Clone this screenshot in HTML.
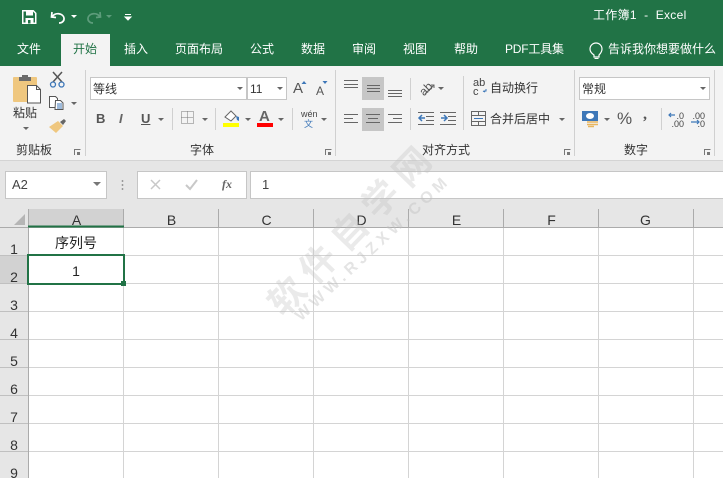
<!DOCTYPE html>
<html><head><meta charset="utf-8"><style>
html,body{margin:0;padding:0}
#p{position:relative;width:723px;height:478px;overflow:hidden;background:#fff;font-family:"Liberation Sans","Noto Sans CJK SC",sans-serif;color:#333}
.a{position:absolute;white-space:nowrap}
.tab{position:absolute;top:41px;font-size:12px;line-height:16px;color:#fff;white-space:nowrap}
.lbl{position:absolute;top:142px;font-size:12px;line-height:16px;color:#333;white-space:nowrap}
.sep{position:absolute;width:1px;background:#d0d0d0}
.box{position:absolute;background:#fff;border:1px solid #c6c6c6;box-sizing:border-box}
.ch{position:absolute;top:211px;width:95px;text-align:center;font-size:14px;line-height:18px;color:#333}
.rh{position:absolute;left:0;width:28px;text-align:center;font-size:14px;line-height:18px;color:#333}
.arr{position:absolute;width:0;height:0;border-left:3px solid transparent;border-right:3px solid transparent;border-top:3px solid #666}
svg{position:absolute;left:0;top:0}
</style></head><body><div id="p">
<div class="a" style="left:0;top:0;width:723px;height:66px;background:#217346"></div>
<div class="a" style="left:61px;top:34px;width:49px;height:32px;background:#f3f3f3"></div>
<div class="a" style="left:0;top:66px;width:723px;height:94px;background:#f3f3f3"></div>
<div class="a" style="left:0;top:160px;width:723px;height:1px;background:#d4d4d4"></div>
<div class="a" style="left:0;top:161px;width:723px;height:48px;background:#e6e6e6"></div>

<div class="tab" style="left:17px">文件</div>
<div class="tab" style="left:73px;color:#217346">开始</div>
<div class="tab" style="left:124px">插入</div>
<div class="tab" style="left:175px">页面布局</div>
<div class="tab" style="left:250px">公式</div>
<div class="tab" style="left:301px">数据</div>
<div class="tab" style="left:352px">审阅</div>
<div class="tab" style="left:403px">视图</div>
<div class="tab" style="left:454px">帮助</div>
<div class="tab" style="left:505px;letter-spacing:-.2px">PDF工具集</div>
<div class="tab" style="left:608px">告诉我你想要做什么</div>
<div class="a" style="left:593px;top:7px;font-size:12px;line-height:16px;color:#fff;letter-spacing:.3px">工作簿1 &nbsp;- &nbsp;Excel</div>

<div class="box" style="left:90px;top:77px;width:157px;height:23px"></div>
<div class="a" style="left:93px;top:81px;font-size:12px;line-height:16px">等线</div>
<div class="box" style="left:247px;top:77px;width:40px;height:23px"></div>
<div class="a" style="left:250px;top:81px;font-size:12px;line-height:16px">11</div>
<div class="box" style="left:579px;top:77px;width:131px;height:23px"></div>
<div class="a" style="left:582px;top:81px;font-size:12px;line-height:16px">常规</div>
<div class="a" style="left:362px;top:77px;width:22px;height:23px;background:#c6c6c6"></div>
<div class="a" style="left:362px;top:108px;width:22px;height:23px;background:#c6c6c6"></div>

<div class="a" style="left:13px;top:105px;font-size:12px;line-height:16px">粘贴</div>
<div class="lbl" style="left:16px">剪贴板</div>
<div class="lbl" style="left:190px">字体</div>
<div class="lbl" style="left:422px">对齐方式</div>
<div class="lbl" style="left:624px">数字</div>
<div class="a" style="left:490px;top:80px;font-size:12px;line-height:16px">自动换行</div>
<div class="a" style="left:490px;top:111px;font-size:12px;line-height:16px">合并后居中</div>
<div class="a" style="left:96px;top:111px;font:bold 13px/16px 'Liberation Sans',sans-serif;color:#555">B</div>
<div class="a" style="left:119px;top:111px;font:italic bold 13px/16px 'Liberation Sans',sans-serif;color:#666">I</div>
<div class="a" style="left:141px;top:111px;font:bold 13px/16px 'Liberation Sans',sans-serif;color:#555;text-decoration:underline">U</div>
<div class="a" style="left:293px;top:80px;font:15px/18px 'Liberation Sans',sans-serif;color:#555">A</div>
<div class="a" style="left:316px;top:83px;font:12px/16px 'Liberation Sans',sans-serif;color:#555">A</div>
<div class="a" style="left:259px;top:109px;font:bold 15px/16px 'Liberation Sans',sans-serif;color:#666">A</div>
<div class="a" style="left:301px;top:109px;font:9px/10px 'Liberation Sans',sans-serif;color:#444">wén</div>
<div class="a" style="left:304px;top:119px;font:9px/10px 'Liberation Sans','Noto Sans CJK SC',sans-serif;color:#3d77b8">文</div>
<div class="a" style="left:473px;top:79px;font:11px/9px 'Liberation Sans',sans-serif;color:#444">ab<br>c</div>
<div class="a" style="left:617px;top:110px;font:17px/18px 'Liberation Sans',sans-serif;color:#555">%</div>
<div class="a" style="left:643px;top:106px;font:bold 16px/18px 'Liberation Serif',serif;color:#555">,</div>
<div class="a" style="left:664px;width:20px;top:112px;font:9px/8px 'Liberation Sans',sans-serif;color:#444;text-align:right">.0<br>.00</div>
<div class="a" style="left:685px;width:20px;top:112px;font:9px/8px 'Liberation Sans',sans-serif;color:#444;text-align:right">.00<br>.0</div>

<div class="arr" style="left:23px;top:127px"></div>
<div class="arr" style="left:71px;top:102px"></div>
<div class="arr" style="left:158px;top:118px"></div>
<div class="arr" style="left:202px;top:118px"></div>
<div class="arr" style="left:245px;top:118px"></div>
<div class="arr" style="left:278px;top:118px"></div>
<div class="arr" style="left:321px;top:118px"></div>
<div class="arr" style="left:237px;top:87px"></div>
<div class="arr" style="left:277px;top:87px"></div>
<div class="arr" style="left:438px;top:87px"></div>
<div class="arr" style="left:559px;top:118px"></div>
<div class="arr" style="left:700px;top:87px"></div>
<div class="arr" style="left:604px;top:118px"></div>

<div class="sep" style="left:85px;top:70px;height:86px"></div>
<div class="sep" style="left:335px;top:70px;height:86px"></div>
<div class="sep" style="left:574px;top:70px;height:86px"></div>
<div class="sep" style="left:714px;top:70px;height:86px"></div>
<div class="sep" style="left:172px;top:108px;height:22px"></div>
<div class="sep" style="left:215px;top:108px;height:22px"></div>
<div class="sep" style="left:292px;top:108px;height:22px"></div>
<div class="sep" style="left:410px;top:78px;height:22px"></div>
<div class="sep" style="left:410px;top:108px;height:22px"></div>
<div class="sep" style="left:463px;top:76px;height:54px"></div>
<div class="sep" style="left:661px;top:108px;height:22px"></div>

<div class="box" style="left:5px;top:171px;width:102px;height:28px;background:#fff"></div>
<div class="a" style="left:12px;top:177px;font-size:13px;line-height:16px;color:#444">A2</div>
<div class="a" style="left:93px;top:182px;border-left:4px solid transparent;border-right:4px solid transparent;border-top:4px solid #777"></div>
<div class="box" style="left:137px;top:171px;width:110px;height:28px;background:#fff"></div>
<div class="box" style="left:250px;top:171px;width:480px;height:28px;background:#fff"></div>
<div class="a" style="left:262px;top:177px;font-size:13px;line-height:16px;color:#444">1</div>
<div class="a" style="left:222px;top:176px;font:italic bold 12px/16px 'Liberation Serif',serif;color:#666">fx</div>

<div class="a" style="left:0;top:209px;width:723px;height:18px;background:#e6e6e6"></div>
<div class="a" style="left:0;top:227px;width:28px;height:251px;background:#e6e6e6"></div>
<div class="a" style="left:28px;top:209px;width:96px;height:18px;background:#d2d2d2"></div>
<div class="a" style="left:0;top:255px;width:28px;height:28px;background:#d2d2d2"></div>

<svg width="723" height="478" viewBox="0 0 723 478" fill="none">
<!-- grid -->
<g stroke="#d4d4d4" stroke-width="1">
<path d="M28 255.500H723M28 283.500H723M28 311.500H723M28 339.500H723M28 367.500H723M28 395.500H723M28 423.500H723M28 451.500H723"/>
<path d="M123.500 227V478M218.500 227V478M313.500 227V478M408.500 227V478M503.500 227V478M598.500 227V478M693.500 227V478"/>
</g>
<path d="M0 227.500H723" stroke="#ababab"/>
<path d="M28.500 209V478" stroke="#ababab"/>
<path d="M123.500 209V227M218.500 209V227M313.500 209V227M408.500 209V227M503.500 209V227M598.500 209V227M693.500 209V227" stroke="#ababab"/>
<path d="M0 255.500H28M0 283.500H28M0 311.500H28M0 339.500H28M0 367.500H28M0 395.500H28M0 423.500H28M0 451.500H28" stroke="#c0c0c0"/>
<path d="M28 226.500H124" stroke="#217346" stroke-width="2"/>
<path d="M25 214V225H14Z" fill="#b5b5b5"/>
<rect x="28" y="255" width="96" height="29" stroke="#217346" stroke-width="2"/>
<rect x="121" y="281" width="5" height="5" fill="#217346"/>

<!-- qat -->
<path d="M22.750 10.750h10.500l2.500 2.500v10h-13z" stroke="#fff" stroke-width="1.500"/>
<path d="M26 10.500h7v5h-7zM25.500 24v-6h8v6" fill="#fff"/><rect x="28" y="20" width="2.500" height="3.500" fill="#217346"/>
<path d="M52 12l-.5 5 4.500.5M52 17c3-5 11-4 12 1 .5 3-2 5-5 5" stroke="#fff" stroke-width="1.700"/>
<path d="M71 15h6l-3 3z" fill="#fff"/>
<path d="M100 12l.5 5-4.500.5M100 17c-3-5-11-4-12 1-.5 3 2 5 5 5" stroke="#5d9c7b" stroke-width="1.700"/>
<path d="M106 15h6l-3 3z" fill="#5d9c7b"/>
<path d="M125 14.500h6M125 17h6l-3 3z" stroke="#fff" stroke-width="1" fill="#fff"/>
<!-- bulb -->
<path d="M594 55c-3-2-4-4-4-6a6 6 0 0 1 12 0c0 2-1 4-3 6v2h-5z" stroke="#fff" stroke-width="1.200"/>
<path d="M594.500 58.500h4" stroke="#fff"/>

<!-- clipboard -->
<rect x="13" y="77" width="24" height="25" rx="1" fill="#efc77f"/>
<path d="M19 77h12v4H19zM22 75h6v3h-6z" fill="#6b6b6b"/>
<path d="M27.500 85.500h9l4 4v13.500h-13z" fill="#fff" stroke="#555"/>
<path d="M36.500 85.500v4h4" stroke="#555"/>
<!-- scissors -->
<path d="M53 72l9 10M62 72L53 82" stroke="#555" stroke-width="1.500"/>
<circle cx="53" cy="84.500" r="2.500" stroke="#3d77b8" stroke-width="1.300"/><circle cx="61.500" cy="84.500" r="2.500" stroke="#3d77b8" stroke-width="1.300"/>
<!-- copy -->
<path d="M49.500 96.500h6l2 2v9h-8z" fill="#fff" stroke="#555"/><path d="M55.500 100.500h5l2.500 2.500v6.500h-8z" fill="#fff" stroke="#555"/>
<path d="M57 104h5M57 106h5M57 108h5" stroke="#3d77b8"/>
<!-- brush -->
<path d="M49 127l9-6 5 5-7 7z" fill="#efc77f"/><path d="M60 122l4-3 2 2-3 4z" fill="#666"/>
<!-- dialog launchers -->
<g stroke="#777"><path d="M74.500 155v-5.500h6M325.500 155v-5.500h6M564.500 155v-5.500h6M704.500 155v-5.500h6"/></g>
<g fill="#777"><rect x="77" y="152" width="3" height="3"/><rect x="328" y="152" width="3" height="3"/><rect x="567" y="152" width="3" height="3"/><rect x="707" y="152" width="3" height="3"/></g>
<!-- border icon -->
<path d="M181.500 111.500h12v12h-12zM187.500 111.500v12M181.500 117.500h12" stroke="#777" stroke-dasharray="1 1"/>
<!-- fill -->
<path d="M225 117l6-6 5 5-5 5z" fill="#fff" stroke="#666"/>
<path d="M236 116l3 1 0 4-2-1z" fill="#3d77b8"/>
<rect x="223" y="123" width="16" height="4" fill="#ffff00"/>
<rect x="257" y="123" width="16" height="4" fill="#ff0000"/>
<!-- size up/down -->
<path d="M301.500 84l2.500-3 2.500 3zM322.500 81l2.500 3 2.500-3z" fill="#3d77b8"/>
<!-- alignment -->
<g stroke="#666" stroke-width="1">
<path d="M344 80.500h14M344 84.500h14M344 87.500h14"/>
<path d="M367 85.500h13M367 88.500h13M367 91.500h13"/>
<path d="M388 90.500h14M388 93.500h14M388 96.500h14"/>
<path d="M344 114.500h14M344 118.500h9M344 122.500h14"/>
<path d="M366 114.500h14M368 118.500h10M366 122.500h14"/>
<path d="M388 114.500h14M393 118.500h9M388 122.500h14"/>
<path d="M418 112.500h16M426 116.500h8M426 120.500h8M418 124.500h16"/>
<path d="M440 112.500h16M448 116.500h8M448 120.500h8M440 124.500h16"/>
<path d="M425 94l9-9M431 85h3v3"/>
</g>
<text x="418" y="94" font-family="Liberation Sans" font-size="12" fill="#555" transform="rotate(-45 424 88)">ab</text>
<path d="M419 118h6M422 115l-3 3 3 3" stroke="#3d77b8" stroke-width="1.500"/>
<path d="M441 118h6M444 115l3 3-3 3" stroke="#3d77b8" stroke-width="1.500"/>
<path d="M484 91h2v-2M485 92l-2-1" stroke="#3d77b8"/>
<!-- merge -->
<rect x="471.500" y="111.500" width="14" height="14" stroke="#666"/>
<path d="M471.500 115.500h14M471.500 121.500h14M478.500 111.500v4M478.500 121.500v4" stroke="#666"/>
<path d="M474 118.500h9" stroke="#3d77b8"/>
<!-- accounting -->
<rect x="582" y="111" width="16" height="10" fill="#3d77b8"/><ellipse cx="590" cy="116" rx="4" ry="3" fill="#fff"/>
<path d="M587 122h11M587 124.500h11M588 126.500h6" stroke="#e9b65e" stroke-width="1.500"/>
<!-- decimal arrows -->
<path d="M675 115h-6M671 113l-2 2 2 2" stroke="#3d77b8" stroke-width="1.200"/>
<path d="M691 122h8M697 120l2 2-2 2" stroke="#3d77b8" stroke-width="1.200"/>
<!-- formula bar -->
<path d="M122.500 180v2M122.500 184v2M122.500 188v2" stroke="#9a9a9a" stroke-width="1.500"/>
<path d="M151 180l9 9M160 180l-9 9" stroke="#c8c8c8" stroke-width="1.500"/>
<path d="M186 185l4 4 7-9" stroke="#c8c8c8" stroke-width="2"/>
</svg>

<div class="ch" style="left:29px">A</div>
<div class="ch" style="left:124px">B</div>
<div class="ch" style="left:219px">C</div>
<div class="ch" style="left:314px">D</div>
<div class="ch" style="left:409px">E</div>
<div class="ch" style="left:504px">F</div>
<div class="ch" style="left:598px">G</div>
<div class="rh" style="top:240px">1</div>
<div class="rh" style="top:268px">2</div>
<div class="rh" style="top:296px">3</div>
<div class="rh" style="top:324px">4</div>
<div class="rh" style="top:352px">5</div>
<div class="rh" style="top:380px">6</div>
<div class="rh" style="top:408px">7</div>
<div class="rh" style="top:436px">8</div>
<div class="rh" style="top:464px">9</div>
<div class="a" style="left:28px;top:233px;width:96px;text-align:center;font-size:14px;line-height:20px;color:#222">序列号</div>
<div class="a" style="left:28px;top:261px;width:96px;text-align:center;font-size:14px;line-height:20px;color:#222">1</div>

<div class="a" style="left:350px;top:232px;width:0;height:0">
<div class="a" style="left:-140px;top:-24px;width:280px;height:48px;box-sizing:border-box;padding-left:9px;text-align:center;font-size:36px;line-height:48px;color:rgba(190,190,190,.32);letter-spacing:9px;transform:rotate(-46deg);font-weight:bold">软件自学网</div>
</div>
<div class="a" style="left:372px;top:250px;width:0;height:0">
<div class="a" style="left:-125px;top:-9px;width:250px;box-sizing:border-box;padding-left:4px;text-align:center;font-size:16px;line-height:18px;color:rgba(190,190,190,.42);letter-spacing:4.600px;transform:rotate(-43deg);font-weight:bold">WWW.RJZXW.COM</div>
</div>
</div></body></html>
